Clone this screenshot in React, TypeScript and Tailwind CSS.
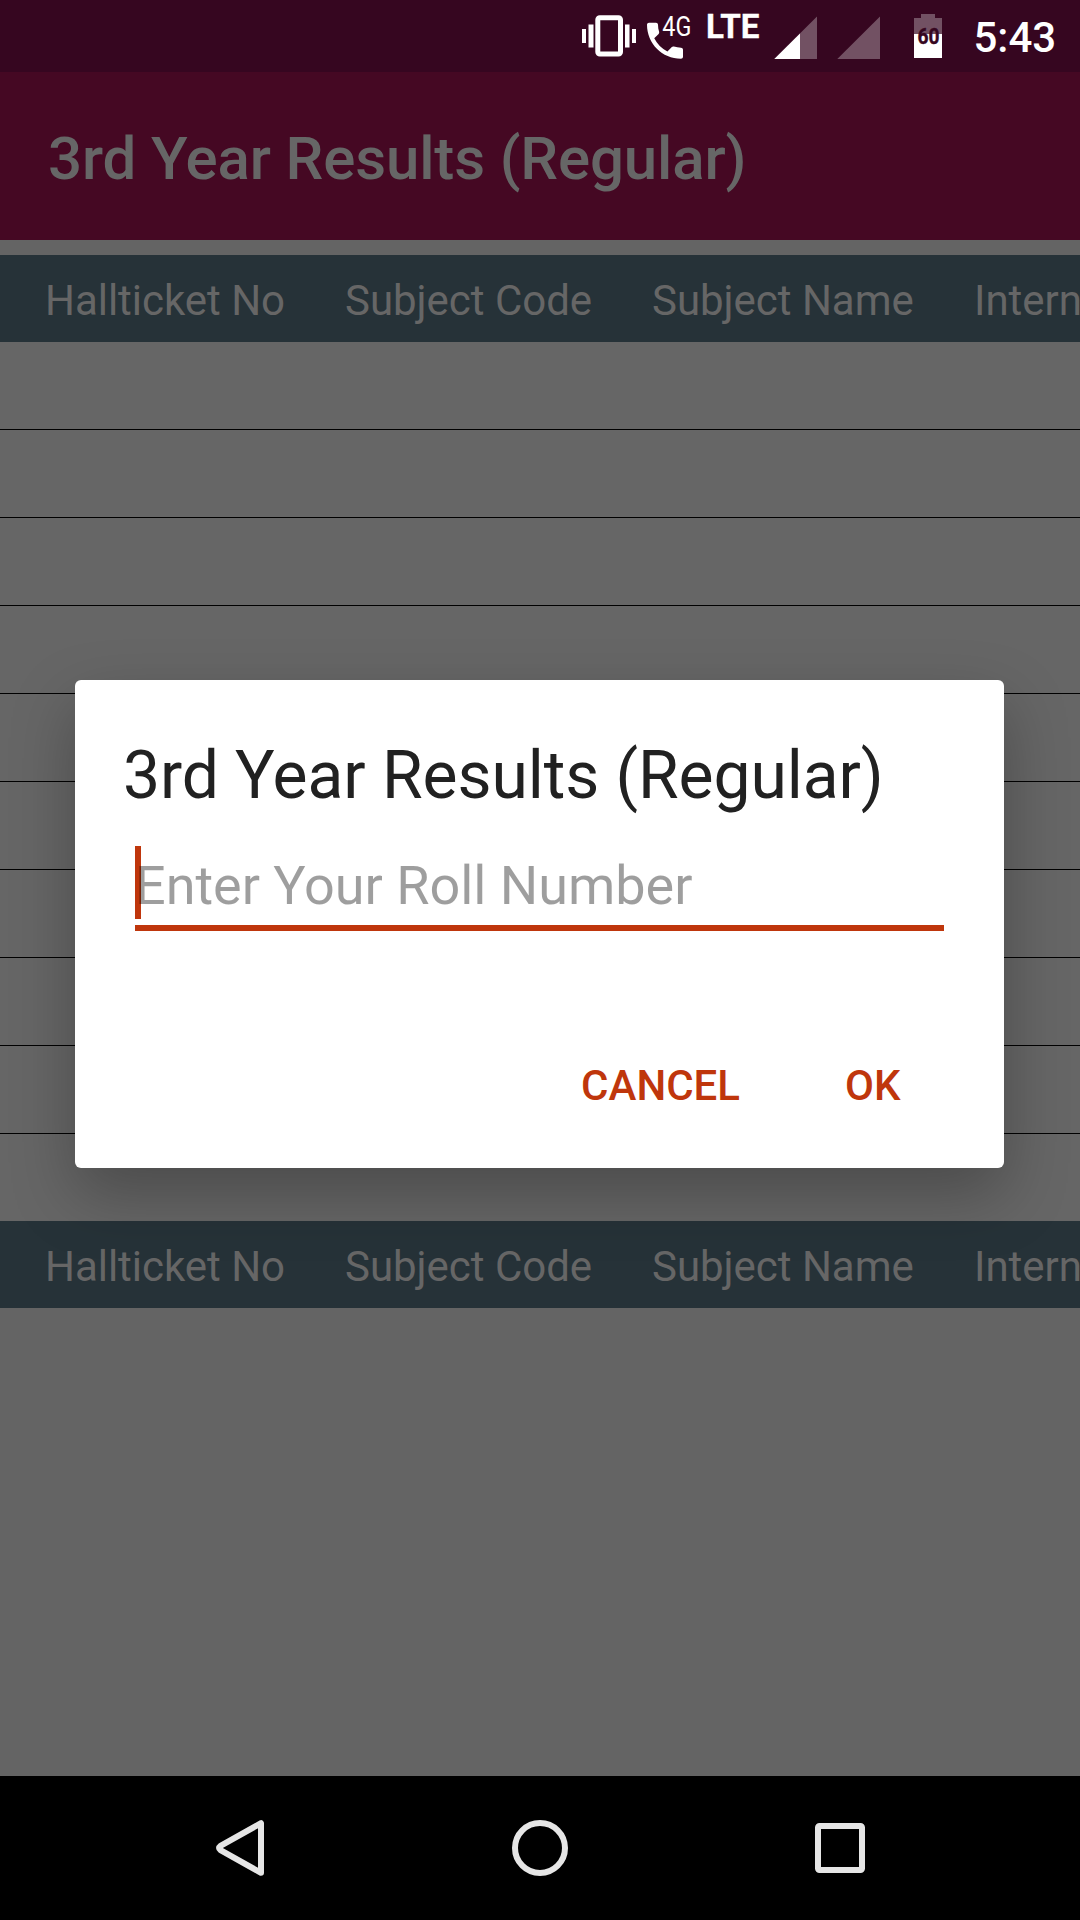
const columns = [
  { label: "Hallticket No", cell: "w-[300px]" },
  { label: "Subject Code", cell: "w-[307px]" },
  { label: "Subject Name", cell: "w-[322px]" },
  { label: "Intern", cell: "w-[300px]" },
];

function StatusBar() {
  return (
    <div className="flex h-[72px] shrink-0 items-start bg-[#360620] pl-[582px]">
      <svg className="h-[72px] w-[54px] shrink-0" viewBox="582 0 54 72" fill="#fff">
        <rect x="582" y="29" width="4" height="14" />
        <rect x="588.5" y="24.5" width="5" height="23" />
        <rect x="625" y="24.5" width="4.5" height="23" />
        <rect x="632" y="29" width="4" height="14" />
        <rect x="597.8" y="17.8" width="22.7" height="36.2" rx="2" fill="none" stroke="#fff" strokeWidth="5" />
      </svg>
      <svg className="ml-[9px] h-[72px] w-[50px] shrink-0" viewBox="645 0 50 72" fill="#fff">
        <path
          transform="translate(641 16.7) scale(2)"
          d="M6.62 10.79c1.44 2.83 3.76 5.14 6.59 6.59l2.2-2.2c.27-.27.67-.36 1.02-.24 1.12.37 2.33.57 3.57.57.55 0 1 .45 1 1V20c0 .55-.45 1-1 1-9.39 0-17-7.61-17-17 0-.55.45-1 1-1h3.5c.55 0 1 .45 1 1 0 1.25.2 2.45.57 3.57.11.35.03.74-.25 1.02l-2.2 2.2z"
        />
        <text x="662.3" y="36.3" fontSize="27.5" textLength="29" lengthAdjust="spacingAndGlyphs">4G</text>
      </svg>
      <svg className="ml-[10px] h-[72px] w-[58px] shrink-0" viewBox="705 0 58 72" fill="#fff" stroke="#fff" strokeWidth=".3">
        <text x="706" y="37.8" fontSize="32.3" fontWeight="700" textLength="53.5" lengthAdjust="spacingAndGlyphs">LTE</text>
      </svg>
      <svg className="ml-[11px] h-[72px] w-[43px] shrink-0" viewBox="774 0 43 72" fill="#fff">
        <path d="M774.3 59L817 16.5V59z" opacity=".3" />
        <path d="M774.3 59L800 33.4V59z" />
      </svg>
      <svg className="ml-[20px] h-[72px] w-[43px] shrink-0" viewBox="837 0 43 72" fill="#fff">
        <path d="M837.3 59L880 16.5V59z" opacity=".3" />
      </svg>
      <svg className="ml-[34px] h-[72px] w-[28px] shrink-0" viewBox="914 0 28 72" fill="#fff">
        <path d="M921 14h14v4h7v16h-28V18h7z" opacity=".3" />
        <rect x="914" y="34" width="28" height="24" />
        <text x="917.6" y="44" fontSize="21.5" fontWeight="700" fill="#360620" stroke="#360620" strokeWidth=".4" textLength="22" lengthAdjust="spacingAndGlyphs">60</text>
      </svg>
      <span className="ml-[31.5px] pt-[1px] text-[42px] leading-[74px] font-medium whitespace-nowrap text-white">5:43</span>
    </div>
  );
}

function TableHeader() {
  return (
    <div className="flex h-[87px] shrink-0 overflow-hidden bg-[#263238] pt-[2px] pl-[45px]">
      {columns.map((c) => (
        <div key={c.label} className={`${c.cell} shrink-0 text-[42px] leading-[87px] tracking-[-0.03px] whitespace-nowrap text-[#666666]`}>
          {c.label}
        </div>
      ))}
    </div>
  );
}

function ResultsTable() {
  return (
    <div className="mt-[15px] flex flex-col bg-[#666666]">
      <TableHeader />
      {Array.from({ length: 9 }, (_, i) => (
        <div key={i} className="h-[88px] border-b border-black" />
      ))}
      <div className="h-[87px]" />
      <TableHeader />
    </div>
  );
}

function RollNumberDialog() {
  return (
    <div className="absolute top-[680px] left-[75px] flex h-[488px] w-[929px] flex-col rounded-[6px] bg-white shadow-[0_26px_64px_rgba(0,0,0,0.27)]">
      <h2 className="pt-[57px] pl-[48px] text-[66px] leading-[78px] tracking-[-0.08px] whitespace-nowrap text-[#212121]">
        3rd Year Results (Regular)
      </h2>
      <div className="relative mt-[31px] mr-[60px] ml-[60px] h-[85px] border-b-[6px] border-[#bf360c]">
        <div className="absolute top-0 left-0 h-[73px] w-[6px] bg-[#bf360c]" />
        <div className="relative pt-[1px] text-[54px] leading-[77px] tracking-[-0.03px] whitespace-nowrap text-black/[0.38]">
          Enter Your Roll Number
        </div>
      </div>
      <div className="mt-[119px] flex justify-end gap-[105px] pr-[103.5px] text-[42px] leading-[72px] font-medium text-[#bf360c]">
        <button>CANCEL</button>
        <button>OK</button>
      </div>
    </div>
  );
}

function NavigationBar() {
  return (
    <div className="flex h-[144px] items-center justify-between bg-black px-[210px]">
      <svg className="size-[60px]" viewBox="210 1818 60 60" fill="none" stroke="#e6e6e6" strokeWidth="6" strokeLinejoin="round">
        <path d="M261 1823.2V1872.8L220.5 1850.2Q217.6 1848 220.5 1845.8z" />
      </svg>
      <svg className="size-[60px]" viewBox="0 0 60 60" fill="none" stroke="#e6e6e6" strokeWidth="6">
        <circle cx="30" cy="30" r="25" />
      </svg>
      <svg className="size-[60px]" viewBox="0 0 60 60" fill="none" stroke="#e6e6e6" strokeWidth="6">
        <rect x="8" y="8" width="44" height="44" rx="1.5" />
      </svg>
    </div>
  );
}

export default function App() {
  return (
    <div className="relative flex h-[1920px] w-[1080px] flex-col overflow-hidden bg-[#646464] font-[Roboto,sans-serif]">
      <StatusBar />
      <header className="flex h-[168px] shrink-0 items-center bg-[#450823] pt-[5px] pl-[48px]">
        <h1 className="text-[60px] leading-[72px] font-medium tracking-[-0.14px] whitespace-nowrap text-[#666666]">
          3rd Year Results (Regular)
        </h1>
      </header>
      <ResultsTable />
      <div className="grow" />
      <NavigationBar />
      <RollNumberDialog />
    </div>
  );
}
